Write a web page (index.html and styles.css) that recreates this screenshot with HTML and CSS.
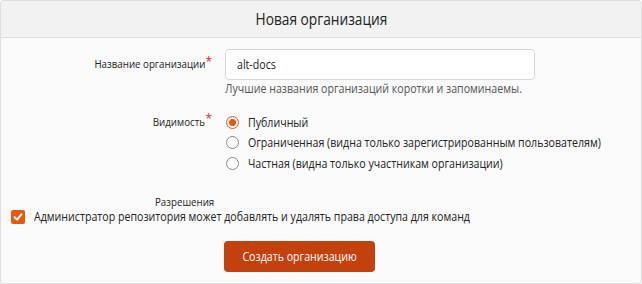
FILE: index.html
```html
<!DOCTYPE html>
<html lang="ru">
<head>
<meta charset="utf-8">
<link rel="stylesheet" href="styles.css">
</head>
<body>
<div class="card">
  <div class="card-header"><span class="nx nx-c">Новая организация</span></div>
  <form class="card-body">
    <div class="field">
      <label class="field-label required"><span class="nx nx-r">Название организации</span></label>
      <div class="field-control">
        <div class="text-input"><span class="nx">alt-docs</span></div>
        <div class="help"><span class="nx">Лучшие названия организаций коротки и запоминаемы.</span></div>
      </div>
    </div>
    <div class="field field-visibility">
      <label class="field-label required"><span class="nx nx-r">Видимость</span></label>
      <div class="field-control radios">
        <label class="radio-row"><span class="radio checked"></span><span class="nx">Публичный</span></label>
        <label class="radio-row"><span class="radio"></span><span class="nx">Ограниченная (видна только зарегистрированным пользователям)</span></label>
        <label class="radio-row"><span class="radio"></span><span class="nx">Частная (видна только участникам организации)</span></label>
      </div>
    </div>
    <div class="perms">
      <div class="perms-label"><span class="nx">Разрешения</span></div>
      <label class="check-row"><span class="checkbox"><svg viewBox="0 0 14 14" width="14" height="14"><path d="M3.6 7.3 L6 9.6 L10.4 4.3" fill="none" stroke="#fff" stroke-width="2" stroke-linecap="round" stroke-linejoin="round"/></svg></span><span class="nx">Администратор репозитория может добавлять и удалять права доступа для команд</span></label>
    </div>
    <div class="actions">
      <button class="btn-primary" type="button"><span class="nx nx-c">Создать организацию</span></button>
    </div>
  </form>
</div>
</body>
</html>
```
FILE: styles.css
```css
* { box-sizing: border-box; }
html, body { margin: 0; padding: 0; background: #fff; }
body {
  font-family: "Open Sans", "Noto Sans", sans-serif;
  color: #222;
}
/* the reference face is rendered narrower than Open Sans */
.nx {
  display: inline-block;
  white-space: nowrap;
  transform: scaleX(0.885);
  transform-origin: left center;
}
.nx-r { transform-origin: right center; }
.nx-c { transform-origin: center center; }
.card {
  width: 642px;
  border: 1px solid #dedede;
  border-radius: 3px;
  background: #fafafa;
  box-shadow: 0 1px 1px rgba(0,0,0,0.06);
}
.card-header {
  height: 37px;
  line-height: 36px;
  background: #f2f2f2;
  border-bottom: 1px solid #dedede;
  text-align: center;
  font-size: 15.5px;
  color: #222;
}
.card-body {
  display: flex;
  flex-direction: column;
  padding: 11px 0 11px;
  margin: 0;
}
.field {
  display: flex;
  align-items: flex-start;
}
.field-label {
  width: 223px;
  flex: none;
  text-align: right;
  font-size: 11px;
  color: #222;
  padding-top: 7px;
  padding-right: 19px;
  position: relative;
  white-space: nowrap;
}
.required::after {
  content: "*";
  color: #db2828;
  position: absolute;
  right: 12px;
  top: 4px;
  font-size: 12px;
}
.field-control { flex: 1; }
.text-input {
  display: flex;
  align-items: center;
  width: 310px;
  height: 31px;
  margin-left: 1px;
  border: 1px solid #d8d8d8;
  border-radius: 4px;
  background: #fff;
  padding: 0 11px;
  font-size: 12px;
  color: #222;
}
.help {
  margin-top: 1px;
  padding-left: 1px;
  font-size: 12px;
  color: #555;
  line-height: 15px;
}
.field-visibility { margin-top: 16px; }
.field-visibility .field-label { padding-top: 2px; }
.field-visibility .required::after { top: -2px; }
.radios { display: flex; flex-direction: column; }
.radio-row {
  display: flex;
  align-items: center;
  height: 20.5px;
  font-size: 12px;
  color: #222;
}
.radio {
  width: 13px;
  height: 13px;
  border: 1px solid #888;
  border-radius: 50%;
  background: #fff;
  margin-left: 2px;
  margin-right: 9px;
  position: relative;
  flex: none;
}
.radio.checked { border-color: #e05a1a; }
.radio.checked::after {
  content: "";
  position: absolute;
  left: 2px; top: 2px;
  width: 7px; height: 7px;
  border-radius: 50%;
  background: #e8590c;
}
.perms { margin-top: 21px; }
.perms-label {
  padding-left: 154px;
  font-size: 11px;
  color: #222;
  line-height: 14px;
}
.check-row {
  display: flex;
  align-items: center;
  padding-left: 10px;
  font-size: 12px;
  color: #222;
  line-height: 16px;
}
.checkbox {
  width: 14px;
  height: 14px;
  border-radius: 2px;
  background: #e8590c;
  margin-right: 9px;
  display: flex;
  flex: none;
}
.actions {
  padding-left: 223px;
  margin-top: 16px;
}
.btn-primary {
  width: 151px;
  height: 31px;
  border: none;
  border-radius: 4px;
  background: #c2410c;
  color: #fff;
  font-family: inherit;
  font-size: 12px;
  cursor: pointer;
  padding: 0;
}
```
